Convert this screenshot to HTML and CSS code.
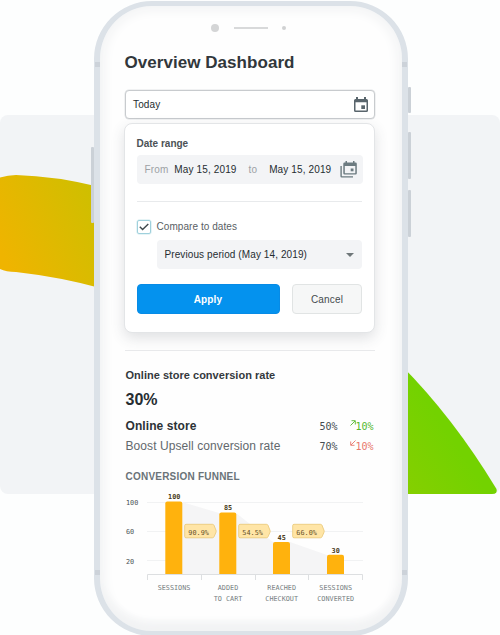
FILE: index.html
```html
<!DOCTYPE html>
<html lang="en">
    <head>
        <meta charset="UTF-8" />
        <meta name="viewport" content="width=device-width, initial-scale=1.0" />
        <title>Overview Dashboard</title>
        <link rel="stylesheet" href="styles.css">
    </head>
    <body>
        <div class="stage">
            <svg class="backdrop" width="500" height="635" viewBox="0 0 500 635">
                <defs>
                    <linearGradient id="gold" gradientUnits="userSpaceOnUse" x1="0" y1="250" x2="110" y2="200">
                        <stop offset="0" stop-color="#efb400" />
                        <stop offset="1" stop-color="#cbc000" />
                    </linearGradient>
                    <linearGradient id="green" gradientUnits="userSpaceOnUse" x1="400" y1="490" x2="460" y2="450">
                        <stop offset="0" stop-color="#86cf00" />
                        <stop offset="1" stop-color="#73d200" />
                    </linearGradient>
                </defs>
                <rect x="0" y="115" width="500" height="379" rx="8" fill="#f2f4f6" />
                <path d="M0 177.500Q8 175 16 175Q55 176 100 187V288Q60 277 16 272Q6 272 0 269Z" fill="url(#gold)" />
                <path d="M400 364Q453 417 496.500 489Q498 494 492 494H400Z" fill="url(#green)" />
            </svg>
            <div class="phone">
                <span class="side-button mute"></span>
                <span class="side-button power"></span>
                <span class="side-button volume-up"></span>
                <span class="side-button volume-down"></span>
                <span class="antenna top-left"></span>
                <span class="antenna top-right"></span>
                <span class="antenna bottom-left"></span>
                <span class="antenna bottom-right"></span>
                <div class="speaker">
                    <span class="camera"></span>
                    <span class="line"></span>
                    <span class="sensor"></span>
                </div>
                <main class="screen">
                    <h1>Overview Dashboard</h1>
                    <div class="date-field">
                        <span>Today</span>
                        <svg width="14" height="16" viewBox="0 0 14 16" fill="#59656c">
                            <path fill-rule="evenodd" d="M2 0H4V2H10V0H12V2H12.500Q14 2 14 3.500V13.500Q14 15 12.500 15H1.500Q0 15 0 13.500V3.500Q0 2 1.500 2H2ZM1.500 5.300V13.500H12.500V5.300Z" />
                            <rect x="7.300" y="8.300" width="3.700" height="3.700" />
                        </svg>
                    </div>
                    <section class="panel">
                        <h2>Date range</h2>
                        <div class="range">
                            <span class="muted">From</span>
                            <span class="from-date">May 15, 2019</span>
                            <span class="muted">to</span>
                            <span class="to-date">May 15, 2019</span>
                            <svg width="17" height="17" viewBox="0 0 17 17" fill="#6c7b80">
                                <path fill-rule="evenodd" d="M5.500 0H7V1.500H13V0H14.500V1.500H15.500Q16.800 1.500 16.800 2.800V12.300Q16.800 13.600 15.500 13.600H4.600Q3.300 13.600 3.300 12.300V2.800Q3.300 1.500 4.600 1.500H5.500ZM4.800 5V12.200H15.300V5Z" />
                                <path d="M0.400 5H1.800V15.200H13V16.600H1.700Q0.400 16.600 0.400 15.300Z" />
                                <rect x="10.700" y="7.500" width="2.800" height="2.800" />
                            </svg>
                        </div>
                        <hr />
                        <div class="compare">
                            <span class="checkbox">
                                <svg width="10" height="8" viewBox="0 0 10 8">
                                    <path d="M0.800 3.800L3.600 6.600L9.300 1" fill="none" stroke="#3f484d" stroke-width="1.400" />
                                </svg>
                            </span>
                            <span>Compare to dates</span>
                        </div>
                        <div class="select">
                            <span>Previous period (May 14, 2019)</span>
                            <span class="caret"></span>
                        </div>
                        <div class="actions">
                            <button type="button" class="apply">Apply</button>
                            <button type="button" class="cancel">Cancel</button>
                        </div>
                    </section>
                    <section class="stats">
                        <h3>Online store conversion rate</h3>
                        <p class="total">30%</p>
                        <div class="row strong">
                            <span class="name">Online store</span>
                            <span class="value">50%</span>
                            <span class="change up">
                                <svg width="6" height="6" viewBox="0 0 6 6"><path d="M0.500 5.500L5 1M1.500 0.700H5.300V4.500" /></svg>10%
                            </span>
                        </div>
                        <div class="row">
                            <span class="name">Boost Upsell conversion rate</span>
                            <span class="value">70%</span>
                            <span class="change down">
                                <svg width="6" height="6" viewBox="0 0 6 6"><path d="M5.500 0.500L1 5M0.700 1.500V5.300H4.500" /></svg>10%
                            </span>
                        </div>
                        <h4>Conversion funnel</h4>
                        <svg class="chart" width="250" height="122" viewBox="125 486 250 122">
                            <path class="grid" d="M147 502.500H363M147 531.500H363M147 560.500H363" />
                            <path class="area" d="M182 502L219 513H236L273 542H290L327 555V574H182Z" />
                            <path class="axis" d="M147.500 580V574.500H362.500V580M201.500 574.500V580M255.500 574.500V580M308.500 574.500V580" />
                            <g class="bars">
                                <path d="M165.300 574V503.500q0-2 2-2h13q2 0 2 2V574z" />
                                <path d="M219.300 574V514.500q0-2 2-2h13q2 0 2 2V574z" />
                                <path d="M273 574V544q0-2 2-2h13q2 0 2 2V574z" />
                                <path d="M327 574V556.700q0-2 2-2h13q2 0 2 2V574z" />
                            </g>
                            <g class="tags">
                                <path d="M186 524.300h26.500q1 0 1.500 1l2 5q.4 1 0 2l-2 4.500q-.5 1-1.500 1H186q-1.300 0-1.300-1.300v-10.900q0-1.300 1.300-1.300z" />
                                <path d="M240 524.300h26.500q1 0 1.500 1l2 5q.4 1 0 2l-2 4.500q-.5 1-1.500 1H240q-1.300 0-1.300-1.300v-10.900q0-1.300 1.300-1.300z" />
                                <path d="M294 524.300h26.500q1 0 1.500 1l2 5q.4 1 0 2l-2 4.500q-.5 1-1.500 1H294q-1.300 0-1.300-1.300v-10.900q0-1.300 1.300-1.300z" />
                            </g>
                            <g class="tag-text">
                                <text x="198.600" y="534.500">90.9%</text>
                                <text x="252.600" y="534.500">54.5%</text>
                                <text x="306.600" y="534.500">66.0%</text>
                            </g>
                            <g class="scale">
                                <text x="126" y="505">100</text>
                                <text x="126" y="534">60</text>
                                <text x="126" y="563.500">20</text>
                            </g>
                            <g class="bar-text">
                                <text x="174.200" y="499">100</text>
                                <text x="228" y="510.300">85</text>
                                <text x="281.700" y="540.300">45</text>
                                <text x="335.700" y="553">30</text>
                            </g>
                            <g class="labels">
                                <text x="174" y="589.500">SESSIONS</text>
                                <text x="228" y="589.500">ADDED</text>
                                <text x="228" y="600.500">TO CART</text>
                                <text x="281.700" y="589.500">REACHED</text>
                                <text x="281.700" y="600.500">CHECKOUT</text>
                                <text x="335.700" y="589.500">SESSIONS</text>
                                <text x="335.700" y="600.500">CONVERTED</text>
                            </g>
                        </svg>
                    </section>
                </main>
            </div>
        </div>
    </body>
</html>
```
FILE: styles.css
```css
* {
    box-sizing: border-box;
    padding: 0;
    margin: 0;
}

body {
    background-color: #fdfefe;
    font-family: "Liberation Sans", Arial, sans-serif;
    font-size: 10px;
    color: #262d31;
    overflow: hidden;
}
.stage {
    position: relative;
    width: 500px;
    height: 635px;
    padding: 1px 0 0 94px;
    overflow: hidden;
}
.backdrop {
    position: absolute;
    top: 0;
    left: 0;
}

/* phone */
.phone {
    position: relative;
    width: 314px;
    height: 635px;
    border: 6px solid #dce2e8;
    border-width: 5px 6px;
    border-radius: 58px;
    background-color: #fefefe;
    box-shadow: inset 0 0 12px 4px #f2f3f4, inset 0 -12px 8px -3px #f2f3f4;
    padding: 18px 27px 0 24.5px;
}
.side-button {
    position: absolute;
    width: 3px;
    background-color: #cbd1d7;
    border-radius: 1px;
}
.mute {
    left: -9px;
    top: 141px;
    height: 76px;
}
.power {
    right: -9px;
    top: 81px;
    height: 26px;
}
.volume-up {
    right: -9px;
    top: 126px;
    height: 47px;
}
.volume-down {
    right: -9px;
    top: 184px;
    height: 47px;
}
.antenna {
    position: absolute;
    width: 5px;
    height: 5px;
    background-color: #ccd2d9;
}
.top-left {
    left: -5px;
    top: 56px;
}
.top-right {
    right: -5px;
    top: 56px;
}
.bottom-left {
    left: -5px;
    top: 564px;
}
.bottom-right {
    right: -5px;
    top: 564px;
}
.speaker {
    display: flex;
    align-items: center;
    height: 8px;
    padding-left: 86.5px;
}
.camera {
    width: 8px;
    height: 8px;
    border-radius: 50%;
    background-color: #d4d5d6;
}
.line {
    width: 34px;
    height: 2px;
    margin: 0 14px 0 15px;
    background-color: #d8d9da;
}
.sensor {
    width: 4px;
    height: 4px;
    border-radius: 50%;
    background-color: #d0d1d2;
}

/* date picker */
h1 {
    margin-top: 21px;
    height: 37px;
    font-size: 17px;
    line-height: 20px;
    letter-spacing: 0.05px;
    color: #31373b;
}
.date-field {
    display: flex;
    align-items: center;
    justify-content: space-between;
    width: 250px;
    height: 29px;
    padding: 0 6px 0 7.5px;
    border: 1px solid #c8cbce;
    border-radius: 4px;
    background-color: #fff;
    box-shadow: 0 0 0 0.5px #e2e4e6;
    letter-spacing: 0.15px;
}
.panel {
    width: 251px;
    height: 210px;
    margin: 4px 0 0 -0.5px;
    padding: 13px 12px 0 11.5px;
    border: 1px solid #e3e5e7;
    border-radius: 8px;
    background-color: #fff;
    box-shadow: 0 5px 14px rgba(60, 70, 80, 0.16);
}
.panel h2 {
    height: 18px;
    font-size: 10px;
    line-height: 14px;
    color: #4b5155;
}
.range {
    display: flex;
    align-items: center;
    width: 226px;
    height: 29px;
    padding-left: 8px;
    border-radius: 4px;
    background-color: #f3f4f6;
    letter-spacing: 0.13px;
}
.range .muted {
    color: #9da1a5;
}
.from-date {
    margin: 0 12px 0 6px;
}
.to-date {
    margin: 0 9px 0 12px;
}
.panel hr {
    margin: 17px 0;
    border: none;
    border-top: 1px solid #e8eaec;
}
.compare {
    display: flex;
    align-items: center;
    gap: 6px;
    height: 15px;
    color: #596064;
    letter-spacing: 0.06px;
}
.checkbox {
    display: flex;
    align-items: center;
    justify-content: center;
    width: 14px;
    height: 14px;
    border: 1px solid #9fd0dc;
    border-radius: 2px;
    box-shadow: 0 0 0 0.5px #cde9ee;
}
.select {
    display: flex;
    align-items: center;
    justify-content: space-between;
    height: 29px;
    margin: 6px 0 15px 20px;
    padding: 0 8px;
    border-radius: 4px;
    background-color: #f3f4f6;
    letter-spacing: 0.1px;
}
.caret {
    border: 4px solid transparent;
    border-top-color: #6f7779;
    border-bottom: none;
}
.actions {
    display: flex;
    justify-content: space-between;
}
.actions button {
    height: 30px;
    border: 1px solid #e1e4e4;
    border-radius: 4px;
    background-color: #f6f7f7;
    font-family: inherit;
    font-size: 10px;
    letter-spacing: 0.15px;
    color: #454b4e;
}
.actions .apply {
    width: 143px;
    border-color: #078be6;
    background-color: #0492ee;
    color: #fff;
    font-weight: bold;
}
.actions .cancel {
    width: 70px;
}

/* stats */
.stats {
    width: 250px;
    margin-top: 17px;
    padding-top: 17px;
    border-top: 1px solid #e8e9eb;
}
.stats h3 {
    padding-left: 1px;
    font-size: 11px;
    line-height: 14px;
    letter-spacing: 0.02px;
    color: #34393d;
}
.total {
    padding-left: 1px;
    margin: 8px 0 6px;
    font-size: 16px;
    font-weight: bold;
    line-height: 20px;
}
.row {
    display: flex;
    align-items: center;
    height: 20px;
    padding-left: 1px;
    font-size: 12px;
    color: #62686c;
    letter-spacing: 0.08px;
}
.row .name {
    width: 194px;
}
.row.strong .name {
    font-weight: bold;
    color: #2c3236;
}
.value,
.change {
    padding-top: 1px;
    font-family: "DejaVu Sans Mono", monospace;
    font-size: 10px;
    letter-spacing: 0;
    color: #444b50;
}
.change {
    display: flex;
    margin-left: 12px;
}
.change svg {
    margin-top: -1px;
    fill: none;
    stroke: currentColor;
    stroke-width: 0.9;
}
.up {
    color: #54b82e;
}
.down {
    color: #e8766c;
}
.stats h4 {
    padding-left: 1px;
    margin: 15px 0 3px;
    font-size: 10px;
    line-height: 12px;
    letter-spacing: 0.22px;
    text-transform: uppercase;
    color: #6a7378;
}

/* funnel chart */
.chart {
    display: block;
    font-family: "DejaVu Sans Mono", monospace;
    font-size: 6.8px;
    text-anchor: middle;
}
.chart .grid {
    stroke: #f1f2f3;
}
.chart .area {
    fill: #f5f5f6;
}
.chart .axis {
    fill: none;
    stroke: #dddfe1;
}
.bars {
    fill: #ffb20d;
}
.tags {
    fill: #ffe5a6;
    stroke: #e8c673;
    stroke-width: 0.8;
}
.tag-text {
    fill: #665026;
}
.scale {
    fill: #4b5154;
    text-anchor: start;
}
.bar-text {
    fill: #493b20;
    font-weight: bold;
}
.labels {
    fill: #777e82;
}
```
